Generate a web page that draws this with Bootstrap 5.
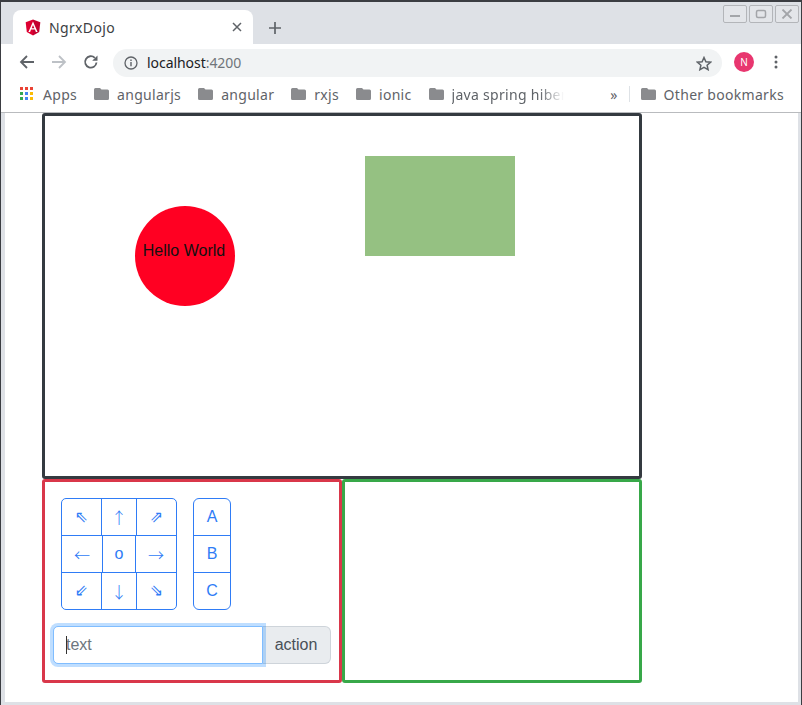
<!DOCTYPE html>
<html lang="en">
<head>
<meta charset="utf-8">
<title>NgrxDojo</title>
<link rel="stylesheet" href="https://cdn.jsdelivr.net/npm/bootstrap@5.3.0/dist/css/bootstrap.min.css">
<style>
html,body{height:705px;overflow:hidden}
body{background:#dee1e6;font-family:"Liberation Sans",Arial,sans-serif;margin:0}
.win-frame{height:705px;border-top:2px solid #3b3d42;border-left:1px solid #3b3d42;border-right:1px solid #3b3d42;padding:0 3px 3px 4px;margin:0;background:#dee1e6}
.tab-strip{height:42px;margin-left:-4px;margin-right:-3px;padding-left:12px;padding-top:8px}
.tab-active{width:240px;height:34px;background:#fff;border-radius:8px 8px 0 0;padding:0 11px 0 12px;font-family:"Noto Sans",sans-serif;font-size:14px;color:#3c4043}
.tab-active .tab-title{margin-left:8px;flex:1;letter-spacing:.35px}
.tab-plus{margin-left:16px;margin-top:1px}
.win-btns{margin-left:auto;margin-right:2px;margin-top:-5px;gap:2px;align-self:flex-start}
.win-btn{width:24px;height:18px;border:1px solid #b3b5b9;border-radius:2px;background:#e3e5e9}
.tool-row{height:36px;background:#fff;margin:0 -3px 0 -4px;padding:0 0 0 18px}
.url-box{width:609px;height:28px;background:#f1f3f4;border-radius:14px;margin-left:14px;margin-top:2px;padding:0 10px 0 11px;font-family:"Noto Sans",sans-serif;font-size:14px;letter-spacing:-.05px;color:#202124}
.url-box .url-port{color:#70757a}
.url-text{margin-left:9px;margin-bottom:2px}
.avatar-dot{width:20px;height:20px;border-radius:50%;background:#e8366f;color:#fff;font:10px "Noto Sans",sans-serif;margin-left:12px}
.menu-dots{margin-left:20px}
.book-row{height:33px;background:#fff;margin:0 -3px 0 -4px;padding:0 0 4px 19px;border-bottom:1px solid #b9bbbe;font-family:"Noto Sans",sans-serif;font-size:14px;letter-spacing:.3px;color:#5f6368}
.book-item{margin-right:17px;gap:8px;white-space:nowrap}
.apps-item{gap:9px}
.fade-text{width:112px;-webkit-mask-image:linear-gradient(90deg,#000 78%,transparent);mask-image:linear-gradient(90deg,#000 78%,transparent)}
.more-sep{height:16px;margin:0 11px}
.last-item{margin-right:17px}
.page-area{height:589px;background:#fff;padding-left:37px}
.stage-box{position:relative;width:600px;height:366px;border:3px solid #343a40;border-radius:3px}
.hello-circle{position:absolute;left:90px;top:90px;width:100px;height:100px;border-radius:50%;background:#ff0022;color:#111;font-size:16px;padding:0 2px 10px 0}
.green-rect{position:absolute;left:320px;top:40px;width:150px;height:100px;background:#95c182}
.half-box{width:300px;height:204px;border:3px solid;border-radius:3px}
.box-red{border-color:#d9374a;padding:16px 8px 0 8px}
.box-green{border-color:#38a849}
.pad-wrap{margin-left:8px;gap:16px}
.pad-grid{width:116px}
.pad-grid .btn,.abc-stack .btn{height:38px;padding:0;font-size:16px;line-height:1;font-family:"Liberation Sans","DejaVu Sans",sans-serif;display:flex;align-items:center;justify-content:center;border-color:#2f7cf6;color:#2f7cf6}
.pad-grid .btn.arrow-key{font-family:"Noto Sans CJK SC",sans-serif;font-weight:300}
.pad-grid .btn-group{display:flex}
.pad-grid .btn-group + .btn-group{margin-top:-1px}
.pad-grid .btn-group .btn{border-radius:0}
.pad-grid .btn-group .w-a{flex:0 0 41px}
.pad-grid .btn-group .w-b{flex:0 0 36px}
.pad-grid .btn-group .w-c{flex:0 0 41px}
.pad-grid .btn-group .w-d{flex:0 0 42px}
.pad-grid .btn-group .w-e{flex:0 0 34px}
.pad-grid .btn-group .w-f{flex:0 0 42px}
.pad-grid .btn-group:first-child .btn:first-child{border-top-left-radius:5px}
.pad-grid .btn-group:first-child .btn:last-child{border-top-right-radius:5px}
.pad-grid .btn-group:last-child .btn:first-child{border-bottom-left-radius:5px}
.pad-grid .btn-group:last-child .btn:last-child{border-bottom-right-radius:5px}
.abc-stack{width:38px}
.abc-stack .btn{width:38px}
.action-group{margin-top:16px;width:278px;flex-wrap:nowrap}
.input-shell{position:relative;display:flex;flex:0 0 210px;z-index:3}
.input-shell .form-control{height:38px;font-size:16px;padding:6px 12px;border-color:#80bdff;box-shadow:0 0 0 3px rgba(0,123,255,.25);border-radius:5px 0 0 5px}
.input-shell .form-control::placeholder{color:#6c757d;opacity:1}
.caret-line{position:absolute;left:13px;top:10px;width:1px;height:18px;background:#333}
.action-group .input-group-text{height:38px;flex:1;justify-content:center;background:#e9ecef;border-color:#ced4da;color:#495057;font-size:16px;padding:0 1px 0 0;margin-left:0!important;border-left:0}
</style>
</head>
<body>
<div class="win-frame d-flex flex-column">
  <div class="tab-strip d-flex align-items-center">
    <div class="tab-active d-flex align-items-center">
      <svg width="16" height="17" viewBox="8 8 234 236"><polygon points="125,10 18,48 34,190 125,242" fill="#dd0031"/><polygon points="125,10 232,48 216,190 125,242" fill="#c3002f"/><path d="M125 40 58 190h25l13.500-33.500h57L167 190h25zm19.500 96h-39L125 89z" fill="#fff"/></svg>
      <span class="tab-title">NgrxDojo</span>
      <svg width="10" height="10" viewBox="0 0 10 10"><path d="M1 1l8 8M9 1l-8 8" stroke="#5f6368" stroke-width="1.500"/></svg>
    </div>
    <svg class="tab-plus" width="12" height="12" viewBox="0 0 12 12"><path d="M6 0v12M0 6h12" stroke="#5f6368" stroke-width="1.700"/></svg>
    <div class="win-btns d-flex">
      <div class="win-btn d-flex align-items-center justify-content-center"><svg width="12" height="8" viewBox="0 0 12 8"><path d="M1 6h10" stroke="#a3a5a9" stroke-width="2"/></svg></div>
      <div class="win-btn d-flex align-items-center justify-content-center"><svg width="12" height="10" viewBox="0 0 12 10"><rect x="1.500" y="1.500" width="9" height="7" rx="1.500" fill="none" stroke="#a3a5a9" stroke-width="1.500"/></svg></div>
      <div class="win-btn d-flex align-items-center justify-content-center"><svg width="12" height="10" viewBox="0 0 12 10"><path d="M1.500 .5l9 9M10.500 .5l-9 9" stroke="#a3a5a9" stroke-width="1.800"/></svg></div>
    </div>
  </div>
  <div class="tool-row d-flex align-items-center">
    <svg width="16" height="14" viewBox="0 0 16 14"><path d="M15 7H2M8 1 2 7l6 6" fill="none" stroke="#5f6368" stroke-width="1.800"/></svg>
    <svg class="ms-3" width="16" height="14" viewBox="0 0 16 14"><path d="M1 7h13M8 1l6 6-6 6" fill="none" stroke="#bdc1c6" stroke-width="1.800"/></svg>
    <svg class="ms-3" width="16" height="16" viewBox="0 0 16 16"><path d="M13.500 8.500A5.700 5.700 0 1 1 11.800 3.800" fill="none" stroke="#5f6368" stroke-width="1.800"/><path d="M14.500 1.500v5.300H9.200z" fill="#5f6368"/></svg>
    <div class="url-box d-flex align-items-center">
      <svg width="14" height="14" viewBox="0 0 14 14"><circle cx="7" cy="7" r="6" fill="none" stroke="#5f6368" stroke-width="1.300"/><path d="M7 6v4.300M7 3.500v1.500" stroke="#5f6368" stroke-width="1.400"/></svg>
      <span class="url-text">localhost<span class="url-port">:4200</span></span>
      <svg class="ms-auto" width="16" height="15" viewBox="0 0 16 15"><path d="M8 1.500l1.900 4.200 4.600.5-3.400 3 1 4.500L8 11.400l-4.100 2.300 1-4.500-3.400-3 4.600-.5z" fill="none" stroke="#5f6368" stroke-width="1.500"/></svg>
    </div>
    <div class="avatar-dot d-flex align-items-center justify-content-center">N</div>
    <svg class="menu-dots" width="4" height="14" viewBox="0 0 4 14"><circle cx="2" cy="2" r="1.500" fill="#5f6368"/><circle cx="2" cy="7" r="1.500" fill="#5f6368"/><circle cx="2" cy="12" r="1.500" fill="#5f6368"/></svg>
  </div>
  <div class="book-row d-flex align-items-center">
    <div class="book-item apps-item d-flex align-items-center">
      <svg width="14" height="14" viewBox="0 0 14 14"><g><rect width="3" height="3" fill="#ea4335"/><rect x="5" width="3" height="3" fill="#ea4335"/><rect x="10" width="3" height="3" fill="#ea4335"/><rect y="5" width="3" height="3" fill="#34a853"/><rect x="5" y="5" width="3" height="3" fill="#4285f4"/><rect x="10" y="5" width="3" height="3" fill="#fbbc04"/><rect y="10" width="3" height="3" fill="#34a853"/><rect x="5" y="10" width="3" height="3" fill="#4285f4"/><rect x="10" y="10" width="3" height="3" fill="#fbbc04"/></g></svg>
      <span>Apps</span>
    </div>
    <div class="book-item d-flex align-items-center"><svg width="15" height="12" viewBox="0 0 15 12"><path d="M1.500 0H6l1.500 1.500h6A1.500 1.500 0 0 1 15 3v7.500A1.500 1.500 0 0 1 13.500 12h-12A1.500 1.500 0 0 1 0 10.500v-9A1.500 1.500 0 0 1 1.500 0z" fill="#8a8b8e"/></svg><span>angularjs</span></div>
    <div class="book-item d-flex align-items-center"><svg width="15" height="12" viewBox="0 0 15 12"><path d="M1.500 0H6l1.500 1.500h6A1.500 1.500 0 0 1 15 3v7.500A1.500 1.500 0 0 1 13.500 12h-12A1.500 1.500 0 0 1 0 10.500v-9A1.500 1.500 0 0 1 1.500 0z" fill="#8a8b8e"/></svg><span>angular</span></div>
    <div class="book-item d-flex align-items-center"><svg width="15" height="12" viewBox="0 0 15 12"><path d="M1.500 0H6l1.500 1.500h6A1.500 1.500 0 0 1 15 3v7.500A1.500 1.500 0 0 1 13.500 12h-12A1.500 1.500 0 0 1 0 10.500v-9A1.500 1.500 0 0 1 1.500 0z" fill="#8a8b8e"/></svg><span>rxjs</span></div>
    <div class="book-item d-flex align-items-center"><svg width="15" height="12" viewBox="0 0 15 12"><path d="M1.500 0H6l1.500 1.500h6A1.500 1.500 0 0 1 15 3v7.500A1.500 1.500 0 0 1 13.500 12h-12A1.500 1.500 0 0 1 0 10.500v-9A1.500 1.500 0 0 1 1.500 0z" fill="#8a8b8e"/></svg><span>ionic</span></div>
    <div class="book-item d-flex align-items-center"><svg width="15" height="12" viewBox="0 0 15 12"><path d="M1.500 0H6l1.500 1.500h6A1.500 1.500 0 0 1 15 3v7.500A1.500 1.500 0 0 1 13.500 12h-12A1.500 1.500 0 0 1 0 10.500v-9A1.500 1.500 0 0 1 1.500 0z" fill="#8a8b8e"/></svg><span class="fade-text">java spring hiber</span></div>
    <span class="ms-auto">»</span>
    <span class="border-start more-sep"></span>
    <div class="book-item last-item d-flex align-items-center"><svg width="15" height="12" viewBox="0 0 15 12"><path d="M1.500 0H6l1.500 1.500h6A1.500 1.500 0 0 1 15 3v7.500A1.500 1.500 0 0 1 13.500 12h-12A1.500 1.500 0 0 1 0 10.500v-9A1.500 1.500 0 0 1 1.500 0z" fill="#8a8b8e"/></svg><span>Other bookmarks</span></div>
  </div>
  <main class="page-area">
    <div class="stage-box">
      <div class="hello-circle d-flex align-items-center justify-content-center">Hello World</div>
      <div class="green-rect"></div>
    </div>
    <div class="d-flex">
      <div class="half-box box-red">
        <div class="pad-wrap d-flex">
          <div class="pad-grid">
            <div class="btn-group"><button class="btn w-a">⇖</button><button class="btn arrow-key w-b">↑</button><button class="btn w-c">⇗</button></div>
            <div class="btn-group"><button class="btn arrow-key w-d">←</button><button class="btn w-e">o</button><button class="btn arrow-key w-f">→</button></div>
            <div class="btn-group"><button class="btn w-a">⇙</button><button class="btn arrow-key w-b">↓</button><button class="btn w-c">⇘</button></div>
          </div>
          <div class="abc-stack btn-group-vertical"><button class="btn">A</button><button class="btn">B</button><button class="btn">C</button></div>
        </div>
        <div class="input-group action-group">
          <div class="input-shell"><input class="form-control" placeholder="text"><span class="caret-line"></span></div>
          <span class="input-group-text">action</span>
        </div>
      </div>
      <div class="half-box box-green"></div>
    </div>
  </main>
</div>
</body>
</html>
